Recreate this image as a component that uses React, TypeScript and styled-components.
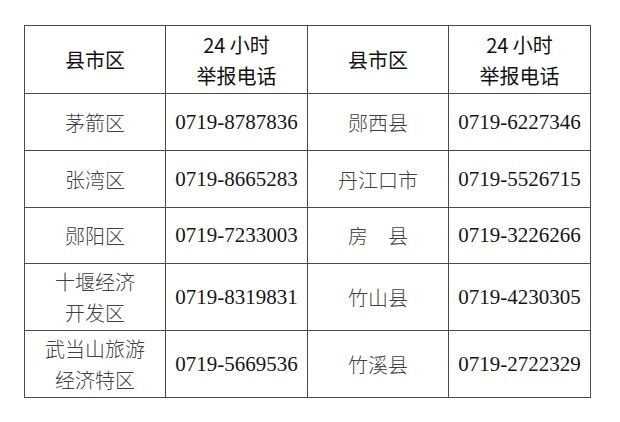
import React from "react";
import styled, { createGlobalStyle } from "styled-components";

const GlobalStyle = createGlobalStyle`
  html, body {
    margin: 0;
    padding: 0;
    background: #ffffff;
  }
`;

const Page = styled.div`
  width: 620px;
  height: 422px;
  padding: 25px 0 0 24px;
  box-sizing: border-box;
  background: #fff;
`;

const Grid = styled.div`
  display: grid;
  grid-template-columns: 141px 142px 141px 142px;
  grid-template-rows: 68px 57px 57px 56px 67px 67px;
  width: 567px;
  box-sizing: border-box;
  border-left: 1px solid #4a4a4a;
  border-top: 1px solid #4a4a4a;
`;

const Cell = styled.div<{ $head?: boolean; $num?: boolean }>`
  box-sizing: border-box;
  border-right: 1px solid #4a4a4a;
  border-bottom: 1px solid #4a4a4a;
  display: flex;
  flex-direction: column;
  align-items: center;
  justify-content: center;
  text-align: center;
  white-space: pre;
  font-family: ${(p) =>
    p.$num
      ? '"Liberation Serif", "Times New Roman", serif'
      : '"Noto Sans CJK SC", "Noto Sans", sans-serif'};
  font-size: ${(p) => (p.$num ? "21px" : "20px")};
  line-height: 31px;
  color: ${(p) => (p.$head ? "#111" : p.$num ? "#151515" : "#404040")};
  font-weight: ${(p) => (p.$head ? 400 : 300)};
`;

type Row = [string, string, string, string];

const rows: Row[] = [
  ["茅箭区", "0719-8787836", "郧西县", "0719-6227346"],
  ["张湾区", "0719-8665283", "丹江口市", "0719-5526715"],
  ["郧阳区", "0719-7233003", "房　县", "0719-3226266"],
  ["十堰经济\n开发区", "0719-8319831", "竹山县", "0719-4230305"],
  ["武当山旅游\n经济特区", "0719-5669536", "竹溪县", "0719-2722329"],
];

export default function App() {
  return (
    <Page>
      <GlobalStyle />
      <Grid>
        <Cell $head>县市区</Cell>
        <Cell $head>{"24 小时\n举报电话"}</Cell>
        <Cell $head>县市区</Cell>
        <Cell $head>{"24 小时\n举报电话"}</Cell>
        {rows.map((r, i) => (
          <React.Fragment key={i}>
            <Cell>{r[0]}</Cell>
            <Cell $num>{r[1]}</Cell>
            <Cell>{r[2]}</Cell>
            <Cell $num>{r[3]}</Cell>
          </React.Fragment>
        ))}
      </Grid>
    </Page>
  );
}
